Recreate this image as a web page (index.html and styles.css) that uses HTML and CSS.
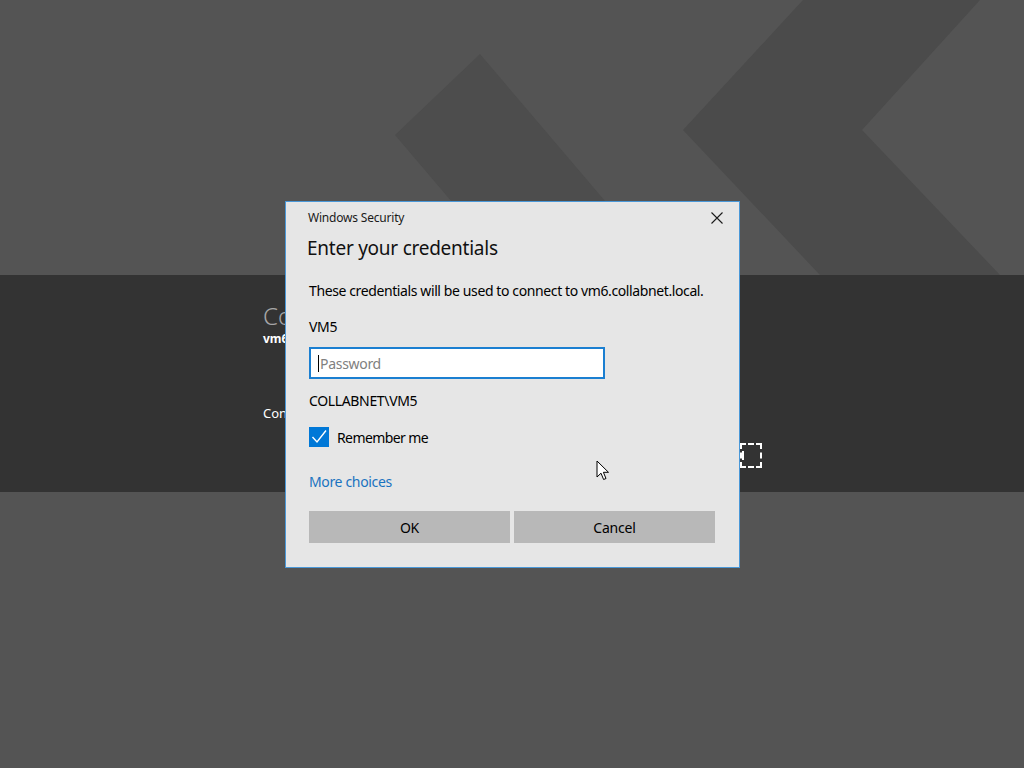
FILE: index.html
```html
<!DOCTYPE html>
<html lang="en">
<head>
    <meta charset="UTF-8">
    <meta name="viewport" content="width=device-width, initial-scale=1.0">
    <title>Windows Security</title>
    <link rel="stylesheet" href="styles.css">
</head>
<body>
    <div class="screen">
        <svg class="backdrop" width="1024" height="275" viewBox="0 0 1024 275">
            <polygon points="480,54 395,135 514,275 668,275" fill="#4d4d4d"/>
            <polygon points="803,0 980,0 862,130 1000,275 820,275 683,130" fill="#4b4b4b"/>
        </svg>

        <div class="top-area"></div>

        <div class="band">
            <div class="band-text">
                <div class="band-title">Co</div>
                <div class="band-host">vm6</div>
                <div class="band-note">Con</div>
            </div>
            <div class="band-actions">
                <span class="focus-box"><span class="focus-mark"></span></span>
            </div>
        </div>

        <div class="dialog">
            <div class="dialog-head">
                <span class="app-name">Windows Security</span>
                <svg class="close" width="12" height="12" viewBox="0 0 12 12">
                    <path d="M0.5 0.5 L11.5 11.5 M11.5 0.5 L0.5 11.5" stroke="#1a1a1a" stroke-width="1.1" fill="none"/>
                </svg>
            </div>
            <h1>Enter your credentials</h1>
            <p class="desc">These credentials will be used to connect to vm6.collabnet.local.</p>
            <div class="user">VM5</div>
            <div class="field">
                <span class="caret"></span>
                <span class="placeholder">Password</span>
            </div>
            <div class="domain">COLLABNET\VM5</div>
            <div class="check-row">
                <span class="checkbox">
                    <svg width="20" height="20" viewBox="0 0 20 20">
                        <path d="M3.5 10 L8 15 L17 3.5" stroke="#ffffff" stroke-width="1.4" fill="none"/>
                    </svg>
                </span>
                <span>Remember me</span>
            </div>
            <a class="more" href="#">More choices</a>
            <div class="buttons">
                <button type="button" class="btn">OK</button>
                <button type="button" class="btn">Cancel</button>
            </div>
        </div>

        <svg class="cursor" width="14" height="22" viewBox="0 0 14 22">
            <path d="M1 1 L1 17 L5 13.2 L7.6 19.5 L10 18.5 L7.4 12.3 L12.5 12.3 Z" fill="#ffffff" stroke="#000000" stroke-width="1"/>
        </svg>
    </div>
</body>
</html>
```

FILE: styles.css
```css
body {
    margin: 0;
    padding: 0;
    font-family: "Noto Sans", "Open Sans", sans-serif;
    background-color: #545454;
}

.screen {
    position: relative;
    width: 1024px;
    height: 768px;
    overflow: hidden;
    background-color: #545454;
    display: flex;
    flex-direction: column;
}

.backdrop {
    position: absolute;
    left: 0;
    top: 0;
}

.top-area {
    height: 275px;
    flex-shrink: 0;
}

.band {
    height: 217px;
    background-color: #333333;
    flex-shrink: 0;
    display: flex;
}

.band-text {
    margin-left: 263px;
    width: 22px;
    white-space: nowrap;
    padding-top: 28px;
    display: flex;
    flex-direction: column;
}

.band-title {
    font-size: 24px;
    line-height: 26px;
    color: #a6a6a6;
    font-weight: 300;
}

.band-host {
    margin-top: 2px;
    font-size: 12px;
    line-height: 16px;
    color: #ffffff;
    font-weight: bold;
}

.band-note {
    margin-top: 57px;
    font-size: 13px;
    line-height: 18px;
    color: #ffffff;
}

.band-actions {
    margin-left: 455px;
    padding-top: 168px;
}

.focus-box {
    width: 18px;
    height: 21px;
    border: 2px dashed #ffffff;
    display: flex;
    align-items: center;
}

.focus-mark {
    width: 2px;
    height: 9px;
    background: #ffffff;
}

.dialog {
    position: absolute;
    left: 285px;
    top: 201px;
    width: 453px;
    height: 365px;
    background-color: #e6e6e6;
    border: 1px solid #4a98d8;
    display: flex;
    flex-direction: column;
    color: #000000;
}

.dialog-head {
    display: flex;
    justify-content: space-between;
    align-items: center;
    padding: 7px 16px 0 22px;
    height: 16px;
}

.app-name {
    font-size: 12px;
    color: #1a1a1a;
    letter-spacing: -0.2px;
}

.close {
    margin-top: 1px;
}

h1 {
    margin: 10px 0 0 21px;
    font-size: 19px;
    font-weight: normal;
    line-height: 26px;
    color: #111111;
    letter-spacing: -0.25px;
}

.desc {
    margin: 20px 0 0 23px;
    font-size: 14px;
    line-height: 20px;
    letter-spacing: -0.39px;
}

.user,
.domain {
    margin-left: 23px;
    font-size: 14px;
    line-height: 20px;
    letter-spacing: -0.35px;
}

.user {
    margin-top: 16px;
}

.field {
    margin: 10px 0 0 23px;
    height: 28px;
    width: 285px;
    background: #ffffff;
    border: 2px solid #1b7fd1;
    display: flex;
    align-items: center;
    padding-left: 7px;
}

.caret {
    width: 1px;
    height: 17px;
    background: #000000;
}

.placeholder {
    font-size: 14px;
    color: #808080;
    letter-spacing: -0.3px;
    margin-left: 1px;
}

.domain {
    margin-top: 12px;
}

.check-row {
    margin: 16px 0 0 23px;
    display: flex;
    align-items: center;
    font-size: 14px;
    letter-spacing: -0.6px;
    gap: 8px;
}

.checkbox {
    width: 20px;
    height: 20px;
    background: #0078d7;
    display: flex;
}

.more {
    margin: 25px 0 0 23px;
    font-size: 14px;
    line-height: 20px;
    color: #1a73c0;
    text-decoration: none;
    letter-spacing: -0.35px;
    align-self: flex-start;
}

.buttons {
    margin: 19px 0 0 23px;
    display: flex;
    gap: 4px;
}

.btn {
    width: 201px;
    height: 32px;
    background-color: #b8b8b8;
    border: none;
    border-radius: 0;
    font-family: "Noto Sans", "Open Sans", sans-serif;
    font-size: 14px;
    color: #000000;
    padding: 0;
    letter-spacing: -0.2px;
}

.cursor {
    position: absolute;
    left: 596px;
    top: 460px;
}
```
